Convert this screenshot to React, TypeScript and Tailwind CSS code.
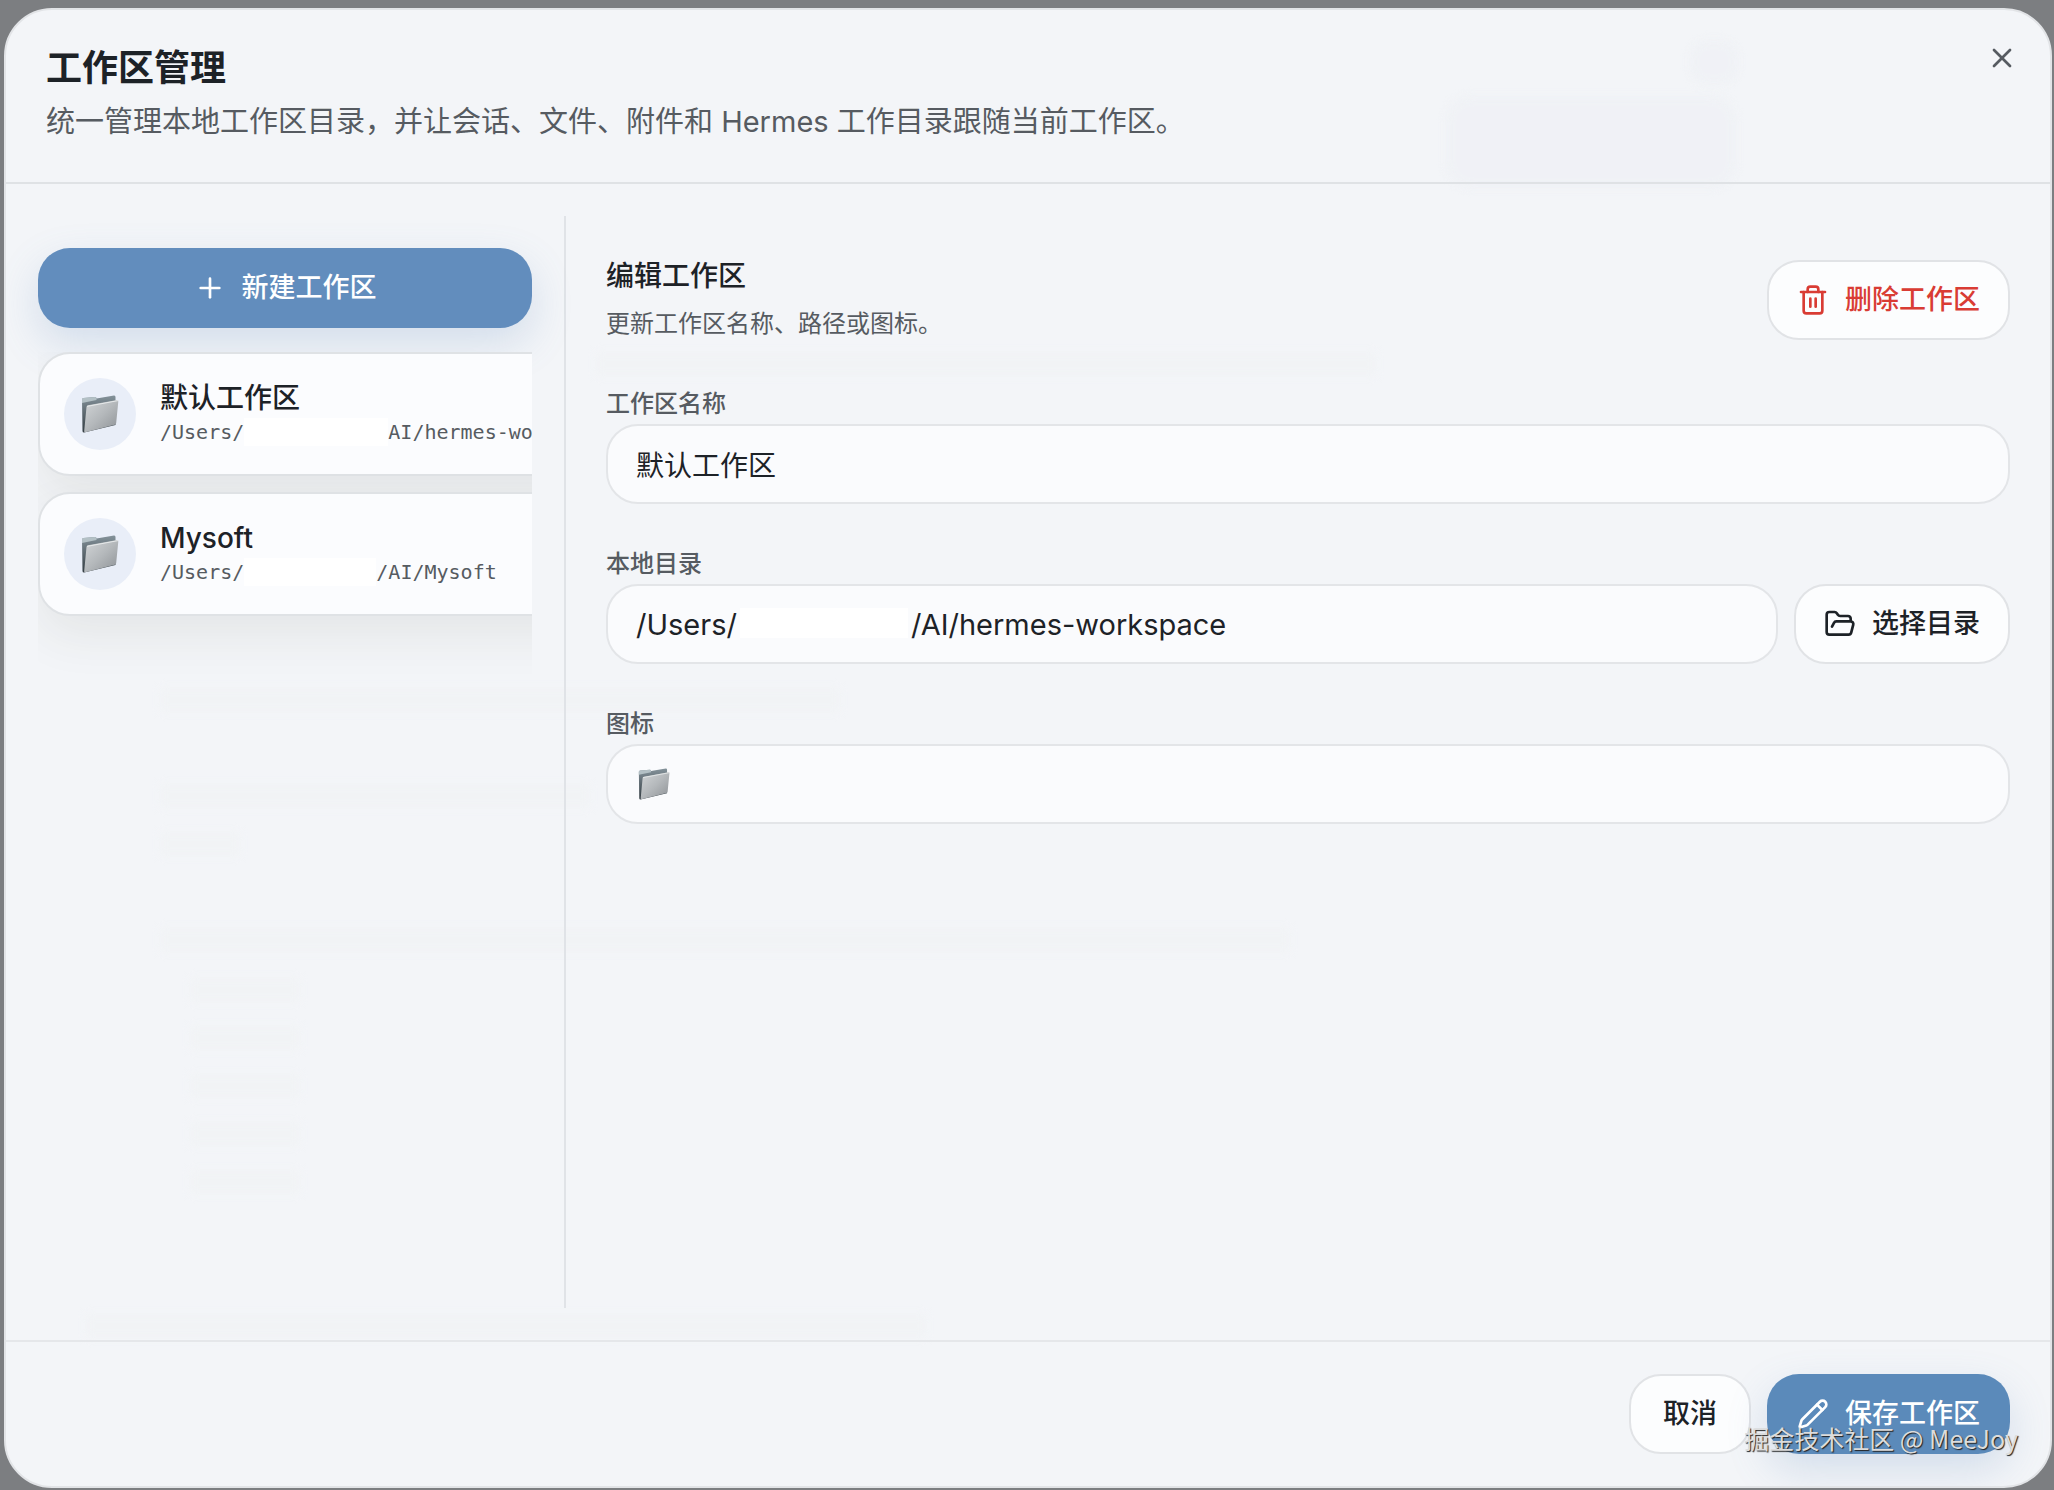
import { useState } from 'react'
import { FolderOpen, Pencil, Plus, Trash2, X } from 'lucide-react'
import clsx from 'clsx'

interface Workspace {
  id: string
  name: string
  prefix: string
  suffix: string
  maskClass: string
}

const workspaces: Workspace[] = [
  {
    id: 'default',
    name: '默认工作区',
    prefix: '/Users/',
    suffix: 'AI/hermes-workspace',
    maskClass: 'w-36',
  },
  {
    id: 'mysoft',
    name: 'Mysoft',
    prefix: '/Users/',
    suffix: '/AI/Mysoft',
    maskClass: 'w-[132px]',
  },
]

// faint traces of the chat page that sits behind the dialog
const traces = [
  'left-[1440px] top-[86px] h-[92px] w-[290px] rounded-3xl bg-[#eff1f5]',
  'left-[1684px] top-[30px] h-[44px] w-[48px] rounded-2xl bg-[#eff1f5]',
  'left-[590px] top-[342px] h-6 w-[780px] bg-[#f1f3f5]',
  'left-[154px] top-[678px] h-6 w-[680px] bg-[#f1f3f5]',
  'left-[154px] top-[774px] h-6 w-[430px] bg-[#f1f3f5]',
  'left-[154px] top-[822px] h-6 w-[80px] bg-[#f1f3f5]',
  'left-[154px] top-[918px] h-6 w-[1130px] bg-[#f1f3f5]',
  'left-[184px] top-[968px] h-6 w-[110px] bg-[#f1f3f5]',
  'left-[184px] top-[1016px] h-6 w-[110px] bg-[#f1f3f5]',
  'left-[184px] top-[1064px] h-6 w-[110px] bg-[#f1f3f5]',
  'left-[184px] top-[1112px] h-6 w-[110px] bg-[#f1f3f5]',
  'left-[184px] top-[1160px] h-6 w-[110px] bg-[#f1f3f5]',
  'left-[80px] top-[1304px] h-6 w-[840px] bg-[#f1f3f5]',
]

const FolderIcon = ({ className }: { className: string }) => (
  <svg className={className} viewBox="0 0 38 38" aria-hidden="true">
    <defs>
      <linearGradient id="folder-front" x1="0" y1="0" x2="1" y2="1">
        <stop offset="0" stopColor="#d3d6d8" />
        <stop offset="0.5" stopColor="#b4b8bb" />
        <stop offset="1" stopColor="#8d9195" />
      </linearGradient>
      <linearGradient id="folder-back" x1="0" y1="0" x2="0" y2="1">
        <stop offset="0" stopColor="#84929a" />
        <stop offset="1" stopColor="#333c42" />
      </linearGradient>
    </defs>
    <path d="M1 4.5 Q1 3 2.5 2.9 L14 2 Q15.5 2 15.5 3.5 L33 .5 Q34.5 .4 34.5 2 V30 L3 37.5 Q1.5 37.5 1.5 36Z" fill="url(#folder-back)" />
    <path d="M1 4.5 Q1 3 2.5 2.9 L14 2 Q15.5 2 15.5 3.5 L15.5 5 L1 8Z" fill="#b3c0c5" />
    <path d="M5.5 12 Q5.6 10.7 7 10.3 L36 5 Q37.5 4.8 37.3 6.5 L35.2 28 Q35 29.4 33.7 29.8 L4.3 37.2 Q3 37.4 3.2 36Z" fill="url(#folder-front)" />
    <path d="M6 11.4 L37 5.6" stroke="#e6e9ea" strokeWidth="1" fill="none" />
  </svg>
)

const outlineButton =
  'flex h-20 shrink-0 items-center justify-center gap-4 whitespace-nowrap rounded-[32px] border-2 border-[#e1e3e6] bg-[#fcfdfe] text-[27px] font-medium'
const fieldClass =
  'h-20 w-full min-w-0 rounded-[32px] border-2 border-[#e3e5e8] bg-[#fafbfd] px-7 text-[#1d2227] outline-none'
const labelClass = 'text-2xl leading-8 font-medium text-[#565b61]'

const WorkspaceCard = ({ workspace }: { workspace: Workspace }) => (
  <button
    type="button"
    className="flex w-[640px] items-center gap-6 rounded-[32px] border-2 border-[#dfe2e5] bg-[#fbfcfe] p-6 text-left shadow-[0_20px_48px_rgba(60,64,40,0.08)]"
  >
    <span className="flex size-[72px] shrink-0 items-center justify-center rounded-full bg-[#e9eef8]">
      <FolderIcon className="size-[38px]" />
    </span>
    <span className="flex flex-col">
      <span className="text-[28px] leading-9 font-medium text-[#1d2227]">{workspace.name}</span>
      <span className="flex items-center font-['DejaVu_Sans_Mono','Liberation_Mono',monospace] text-xl leading-8 text-[#565b61]">
        {workspace.prefix}
        <span className={clsx('h-7 bg-white', workspace.maskClass)} />
        {workspace.suffix}
      </span>
    </span>
  </button>
)

const App = () => {
  const [name, setName] = useState('默认工作区')
  const [icon, setIcon] = useState('')

  return (
    <div className="flex min-h-screen bg-[#7c7e81] pt-2 pr-0.5 pb-0.5 pl-1 font-['Inter','Noto_Sans_CJK_SC',sans-serif] text-[#1d2227]">
      <div
        role="dialog"
        aria-labelledby="dialog-title"
        className="relative isolate flex min-w-0 flex-1 flex-col overflow-hidden rounded-[48px] border-2 border-[#e2e4e7] bg-[#f3f5f8]"
      >
        <div aria-hidden="true" className="absolute inset-0 -z-10 opacity-80 blur-xs">
          {traces.map((trace) => (
            <div key={trace} className={clsx('absolute', trace)} />
          ))}
        </div>

        <header className="flex items-start justify-between border-b-2 border-[#dfe2e5] pt-8 pr-8 pb-10 pl-10">
          <div>
            <h1 id="dialog-title" className="text-4xl leading-[52px] font-bold">
              工作区管理
            </h1>
            <p className="mt-2 text-[29px] leading-10 text-[#565b61]">
              统一管理本地工作区目录，并让会话、文件、附件和 Hermes 工作目录跟随当前工作区。
            </p>
          </div>
          <button type="button" aria-label="关闭" className="text-[#565b61]">
            <X className="size-8" />
          </button>
        </header>

        <div className="flex flex-1 py-8 pl-8">
          <aside className="flex w-[528px] shrink-0 flex-col gap-6 border-r-2 border-[#e0e3e7] pt-8 pr-8">
            <button
              type="button"
              className="flex h-20 shrink-0 items-center justify-center gap-4 rounded-[32px] bg-[#628dbd] text-[27px] font-medium text-white shadow-[0_16px_40px_rgba(98,141,189,0.22)]"
            >
              <Plus className="size-8" />
              新建工作区
            </button>
            <div className="flex flex-1 flex-col gap-4 overflow-hidden">
              {workspaces.map((workspace) => (
                <WorkspaceCard key={workspace.id} workspace={workspace} />
              ))}
            </div>
          </aside>

          <main className="min-w-0 flex-1 px-10 pt-10">
            <div className="flex items-center justify-between">
              <div>
                <h2 className="text-[28px] leading-10 font-medium">编辑工作区</h2>
                <p className="mt-2 text-2xl leading-10 text-[#565b61]">更新工作区名称、路径或图标。</p>
              </div>
              <button type="button" className={clsx(outlineButton, 'px-7 text-[#d93c34]')}>
                <Trash2 className="size-8" />
                删除工作区
              </button>
            </div>

            <form className="mt-11 flex flex-col gap-11">
              <div className="flex flex-col gap-1">
                <label htmlFor="workspace-name" className={labelClass}>
                  工作区名称
                </label>
                <input
                  id="workspace-name"
                  className={clsx(fieldClass, 'text-[28px]')}
                  value={name}
                  onChange={(e) => setName(e.target.value)}
                />
              </div>
              <div className="flex flex-col gap-1">
                <label htmlFor="workspace-path" className={labelClass}>
                  本地目录
                </label>
                <div className="flex gap-4">
                  <div className="relative min-w-0 flex-1">
                    <input
                      id="workspace-path"
                      className={clsx(fieldClass, 'text-[29px]')}
                      readOnly
                      value={'/Users/' + '\u2003'.repeat(6) + '/AI/hermes-workspace'}
                    />
                    <span className="absolute top-6 left-[134px] h-[30px] w-[168px] bg-white" />
                  </div>
                  <button type="button" className={clsx(outlineButton, 'px-7')}>
                    <FolderOpen className="size-8" />
                    选择目录
                  </button>
                </div>
              </div>
              <div className="flex flex-col gap-1">
                <label htmlFor="workspace-icon" className={labelClass}>
                  图标
                </label>
                <div className="relative">
                  <input
                    id="workspace-icon"
                    className={clsx(fieldClass, 'text-[28px]')}
                    value={icon}
                    onChange={(e) => setIcon(e.target.value)}
                  />
                  {!icon && <FolderIcon className="pointer-events-none absolute top-6 left-8 size-8" />}
                </div>
              </div>
            </form>
          </main>
        </div>

        <footer className="flex justify-end gap-4 border-t-2 border-[#e5e7ea] px-10 py-8">
          <button type="button" className={clsx(outlineButton, 'px-8')}>
            取消
          </button>
          <button
            type="button"
            className="flex h-20 items-center gap-4 rounded-[32px] bg-[#5b8aba] px-[30px] text-[27px] font-medium text-white shadow-[0_16px_40px_rgba(98,141,189,0.22)]"
          >
            <Pencil className="size-8" />
            保存工作区
          </button>
        </footer>
      </div>

      <span className="pointer-events-none absolute right-9 bottom-8 font-['Noto_Sans_CJK_SC',sans-serif] text-[25px] leading-10 text-[#dcdcdc] [text-shadow:1px_1px_1px_#222]">
        掘金技术社区 @ MeeJoy
      </span>
    </div>
  )
}

export default App
